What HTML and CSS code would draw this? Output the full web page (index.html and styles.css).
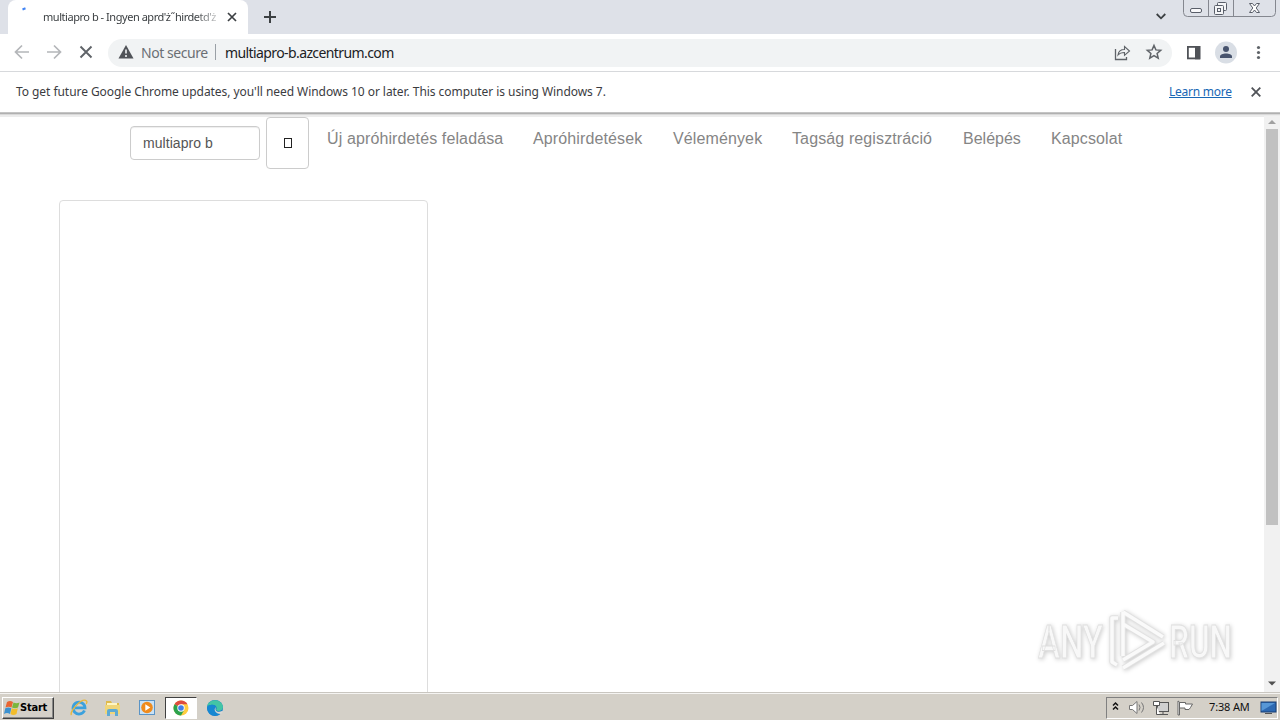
FILE: index.html
```html
<!DOCTYPE html>
<html lang="hu">
<head>
<meta charset="utf-8">
<title>multiapro b</title>
<link rel="stylesheet" href="styles.css">
</head>
<body>
<div class="screen">
  <header class="tabstrip">
    <div class="tab">
      <svg class="spinner" width="16" height="20" viewBox="0 0 16 20"><path d="M6.500 6.500l3-1.200" stroke="#4285f4" stroke-width="2" fill="none"/></svg>
      <span class="tab-title">multiapro b - Ingyen aprd'ż˝hirdetd'ż</span>
      <svg class="tab-close" width="10" height="10" viewBox="0 0 10 10"><path d="M1 1l8 8M9 1l-8 8" stroke="#3c4043" stroke-width="1.7"/></svg>
    </div>
    <svg class="new-tab" width="12" height="12" viewBox="0 0 12 12"><path d="M6 0v12M0 6h12" stroke="#3c4043" stroke-width="2"/></svg>
    <svg class="tab-menu" width="10" height="7" viewBox="0 0 10 7"><path d="M.7 1l4.3 4.3L9.300 1" fill="none" stroke="#3c4043" stroke-width="1.8"/></svg>
    <div class="window-buttons">
      <svg width="94" height="18" viewBox="0 0 94 18">
        <path d="M.5 0v12.500q0 4 4 4h84q4 0 4-4V0M25.500 0v16M50.500 0v16" fill="none" stroke="#84878f"/>
        <rect x="7.500" y="8.500" width="11" height="4" rx="1.500" fill="#f8f8fa" stroke="#595e69"/>
        <g fill="#f4f5f7" stroke="#595e69"><rect x="34.500" y="2.500" width="9" height="8" rx="1"/><rect x="31.500" y="5.500" width="9" height="9" rx="1"/><rect x="34.500" y="8.500" width="3" height="3"/></g>
        <path d="M66.500 3.500h3l2 2.500 2-2.500h3l-3.300 4.500 3.300 4.500h-3l-2-2.500-2 2.500h-3l3.300-4.500z" fill="#fff" stroke="#595e69"/>
      </svg>
    </div>
  </header>

  <div class="toolbar">
    <svg class="nav-icons" width="108" height="36" viewBox="0 0 108 36" fill="none" stroke-width="1.700">
      <path d="M29 17H16M22 10.500L15.500 17l6.500 6.500M47 17h13M54 10.500l6.500 6.500-6.500 6.500" stroke="#b4b6b9"/>
      <path d="M80.500 11.500l11 11M91.500 11.500l-11 11" stroke="#5f6368" stroke-width="1.900"/>
    </svg>
    <div class="omnibox">
      <svg class="warn" width="16" height="14" viewBox="0 0 16 14"><path d="M8 0l7.500 13.500H.5z" fill="#505358"/><path d="M8 4.500v4M8 10v2" stroke="#f1f3f4" stroke-width="1.600"/></svg>
      <span class="not-secure">Not secure</span>
      <span class="divider"></span>
      <span class="url">multiapro-b.azcentrum.com</span>
      <svg class="omni-icons" width="52" height="20" viewBox="0 0 52 20" fill="none" stroke="#5f6368" stroke-width="1.300">
        <path d="M3.500 6v10.500h11V14"/><path d="M6 12c.5-4 2.500-5.500 6.500-5.500V3.500l5 4.500-5 4.300V9.500c-3 0-4.800.5-6.500 2.500z" stroke-width="1.100"/>
        <path d="M42 2.500l1.900 4.400 4.800.4-3.600 3.200 1.100 4.700-4.200-2.500-4.200 2.500 1.100-4.700-3.600-3.200 4.800-.4z" stroke-width="1.500"/>
      </svg>
    </div>
    <svg class="right-icons" width="96" height="24" viewBox="0 0 96 24">
      <rect x="3.900" y="5.900" width="11.500" height="11.500" fill="none" stroke="#505358" stroke-width="1.800"/><rect x="11" y="5" width="5.300" height="13.300" fill="#505358"/>
      <circle cx="42" cy="11.500" r="11" fill="#d9dee5"/><circle cx="42" cy="8" r="3" fill="#47536d"/><path d="M36 17v-1.500c0-4 12-4 12 0v1.500z" fill="#47536d"/>
      <g fill="#5f6368"><circle cx="74.500" cy="6.500" r="1.600"/><circle cx="74.500" cy="11.500" r="1.600"/><circle cx="74.500" cy="16.500" r="1.600"/></g>
    </svg>
  </div>

  <div class="infobar">
    <span class="info-text">To get future Google Chrome updates, you'll need Windows 10 or later. This computer is using Windows 7.</span>
    <span class="learn">Learn more</span>
    <svg class="info-close" width="10" height="10" viewBox="0 0 10 10"><path d="M.7.700l8.600 8.600M9.300.700L.7 9.300" stroke="#505358" stroke-width="1.800"/></svg>
  </div>

  <div class="viewport">
    <main class="page">
      <nav class="site-nav">
        <div class="search-field">multiapro b</div>
        <div class="search-button"><span class="missing-glyph"></span></div>
        <a class="n1">Új apróhirdetés feladása</a>
        <a class="n2">Apróhirdetések</a>
        <a class="n3">Vélemények</a>
        <a class="n4">Tagság regisztráció</a>
        <a class="n5">Belépés</a>
        <a class="n6">Kapcsolat</a>
      </nav>
      <section class="card"></section>
    </main>
    <aside class="scrollbar">
      <svg width="16" height="12" viewBox="0 0 16 12"><path d="M4 8l4-4 4 4z" fill="#a0a0a0"/></svg>
      <div class="thumb"></div>
      <svg class="down" width="16" height="14" viewBox="0 0 16 14"><path d="M4 4.500l4 4 4-4z" fill="#505050"/></svg>
    </aside>
    <svg class="watermark" width="210" height="72" viewBox="0 0 210 72">
      <g class="mark-text"><text x="7" y="54" textLength="65" lengthAdjust="spacingAndGlyphs">ANY</text><text x="138" y="54" textLength="63" lengthAdjust="spacingAndGlyphs">RUN</text></g>
      <g fill="none" stroke-linejoin="round">
        <path d="M87 14h-6v44l5 3M92 64l41-25M92 8v44M92 8l40 25M92 20l30 18-30 18" stroke="#e2e2e2" stroke-width="5.500"/>
        <path d="M87 14h-6v44l5 3M92 64l41-25M92 8v44M92 8l40 25M92 20l30 18-30 18" stroke="#fafafa" stroke-width="3.500"/>
      </g>
    </svg>
  </div>

  <footer class="taskbar">
    <div class="start">
      <svg width="18" height="16" viewBox="0 0 18 16"><path d="M4 2q3-2 6 0L8.500 7.500q-3-1.500-6 0z" fill="#e96532"/><path d="M10.500 2.500q3 1.500 6 0l-1.500 5q-3 1.500-6 0z" fill="#7bb63b"/><path d="M2.300 8.200q3-1.500 6 0L7 14q-3-2-6 0z" fill="#3c91d0"/><path d="M8.800 8.300q3 1.500 6 0L13.500 14q-3 2-6 0z" fill="#f2bd2c"/></svg>
      <span>Start</span>
    </div>
    <div class="task ie"><svg width="18" height="18" viewBox="0 0 18 18"><path d="M14.500 11.500A6 6 0 1 1 15 8.800H5" fill="none" stroke="#3ba1dd" stroke-width="2.800"/><path d="M1.500 16C-1 13 12-2 16.500 2q1 1-.3 3" fill="none" stroke="#e8b73c" stroke-width="1.300"/></svg></div>
    <div class="task"><svg width="18" height="18" viewBox="0 0 18 18"><path d="M2 2h5l1 2h7v9H2z" fill="#dfba4b"/><path d="M3 4h10v8H3z" fill="#fff6c3"/><path d="M1 6h15v9H1z" fill="#f0d67a"/><path d="M3 17v-5q0-2 2-2h7q2 0 2 2v5h-3v-4H6v4z" fill="#5eaad3"/></svg></div>
    <div class="task"><svg width="18" height="18" viewBox="0 0 18 18"><rect x="1.500" y="1.500" width="15" height="14" fill="#c9e2f6" stroke="#5a94c6"/><circle cx="9" cy="8.500" r="5.800" fill="#ef8b1d"/><path d="M7.300 5.300v6.400l5-3.200z" fill="#fff"/></svg></div>
    <div class="task active"><svg width="16" height="16" viewBox="0 0 16 16"><circle cx="8" cy="8" r="7.500" fill="#ffcd40"/><path d="M8 8L1.500 4.250A7.500 7.500 0 0 1 14.500 4.250H8z" fill="#de4c40"/><path d="M8 8L1.500 4.250A7.500 7.500 0 0 0 8 15.500l3.200-5.600z" fill="#2ba24d"/><circle cx="8" cy="8" r="3.700" fill="#fff"/><circle cx="8" cy="8" r="2.800" fill="#427fe8"/></svg></div>
    <div class="task edge"><svg width="18" height="18" viewBox="0 0 18 18"><circle cx="9" cy="9" r="8" fill="#167bc9"/><path d="M1 8C2-1 16-1 17 8c0 4-5 5-7 3 2-3-1-6-5-5Q2 6 1 8z" fill="#43c5a5"/><path d="M1 8c2-3 8-3 9 0-3 0-3 6 5 6-4 5-14 3-14-6z" fill="#1688d2"/><path d="M10 8c-2 4 2 6 6 4l1 .5-2 2.500c-6 0-8-5-5-7z" fill="#ddd9d3"/></svg></div>
    <div class="tray">
      <svg width="90" height="20" viewBox="0 0 90 20">
        <path d="M6 7.500l2.500-2.500L11 7.500M6 11.500l2.500-2.500L11 11.500" fill="none" stroke="#111" stroke-width="1.500"/>
        <path d="M22.500 7.500h3l4.500-4v12l-4.500-4h-3z" fill="#fff" stroke="#777"/><path d="M32 6.500q2 3 0 6M34.500 4.500q4 5 0 10" fill="none" stroke="#777"/>
        <rect x="50.500" y="4.500" width="11" height="9" fill="#d0d0d0" stroke="#555"/><path d="M52 16.500h9M56 14v2" stroke="#555"/><path d="M46.500 3.500h6v4h-6zM49.500 7.500v9H53" fill="#fff" stroke="#555"/>
        <path d="M71 3v14h1.500V4z" fill="#fff" stroke="#666"/><path d="M72.500 4.500h6v1.500h7l-2 3.500-1.500 2h-4V10h-5.500z" fill="#fff" stroke="#666"/>
      </svg>
      <span class="clock">7:38 AM</span>
      <svg class="desktop" width="17" height="15" viewBox="0 0 17 15"><rect x="1" y="2" width="15" height="10" fill="#2d69b2" stroke="#183f75"/><path d="M1.500 11V3H15z" fill="#5797d6"/><path d="M5 13.500h7" stroke="#555"/></svg>
    </div>
  </footer>
</div>
</body>
</html>
```
FILE: styles.css
```css
* { box-sizing: border-box; }
body { margin: 0; background: #fff; font-family: "Noto Sans", sans-serif; }
svg { display: block; flex: none; }
.screen { width: 1280px; height: 720px; display: flex; flex-direction: column; overflow: hidden; }
.screen span, .site-nav a { white-space: nowrap; }
.tabstrip { height: 34px; flex: none; display: flex; background: #dee1e8; }
.tab { width: 240px; height: 34px; margin-left: 8px; background: #fff; display: flex; align-items: center; border-radius: 8px 8px 0 0; }
.spinner { margin: -8px 0 0 8px; }
.tab-title { width: 177px; height: 17px; margin: -1px 0 0 11px; font-size: 11px; line-height: 17px; letter-spacing: -0.46px; color: #3c4043; -webkit-mask-image: linear-gradient(90deg, #000 86%, rgba(0,0,0,.15)); }
.tab-close { margin-left: 7px; }
.new-tab { margin: 11px 0 0 16px; }
.tab-menu { margin: 13px 0 0 880px; }
.window-buttons { margin-left: 17px; }
.toolbar { height: 38px; flex: none; display: flex; align-items: center; border-bottom: 1px solid #d7d9dc; background: #fff; }
.omnibox { width: 1064px; height: 28px; border-radius: 14px; background: #f1f3f4; display: flex; align-items: center; font-size: 14px; }
.warn { margin: -2px 0 0 10px; }
.not-secure { width: 67px; margin-left: 7px; color: #6b6f74; letter-spacing: -0.45px; }
.divider { width: 1px; height: 16px; margin: -2px 0 0 7px; background: #9aa0a6; }
.url { width: 180px; margin-left: 9px; color: #202124; letter-spacing: -0.6px; }
.omni-icons { margin-left: auto; margin-right: 8px; }
.right-icons { margin-left: 12px; }
.infobar { height: 40px; flex: none; padding: 0 19px 2px 16px; display: flex; align-items: center; font-size: 12px; color: #3b3c3f; }
.info-text { letter-spacing: -.055px; }
.learn { margin-left: auto; width: 62px; color: #1967b5; letter-spacing: -.26px; text-decoration: underline; }
.info-close { margin: 1px 0 0 20px; }
.viewport { position: relative; height: 580px; flex: none; display: flex; background: #fff; box-shadow: inset 0 1px #c4c4c4, inset 0 2px #b0b0b0, inset 0 3px #d8d8d8, inset 0 5px #ececec; }
.page { width: 1264px; height: 580px; overflow: hidden; }
.site-nav { display: flex; height: 88px; padding: 5px 0 0 130px; font: 16px/20px "Liberation Sans", Arial, sans-serif; letter-spacing: .12px; color: #858585; }
.search-field { width: 130px; height: 34px; margin-top: 9px; padding: 6px 12px; border: 1px solid #ccc; border-radius: 4px; box-shadow: inset 0 1px 1px #eee; font-size: 14px; letter-spacing: .05px; color: #555; }
.search-button { width: 43px; height: 52px; margin: 0 18px 0 6px; border: 1px solid #ccc; border-radius: 4px; display: flex; align-items: center; justify-content: center; background: #fff; }
.missing-glyph { width: 8px; height: 10px; border: 1px solid #222; }
.site-nav a { padding-top: 12px; flex: none; }
.n1 { width: 206px; }
.n2 { width: 140px; }
.n3 { width: 119px; }
.n4 { width: 171px; }
.n5 { width: 88px; letter-spacing: 0; }
.card { width: 369px; height: 520px; margin-left: 59px; border: 1px solid #ddd; border-radius: 4px; }
.scrollbar { width: 16px; height: 576px; margin-top: 4px; background: #f1f1f1; display: flex; flex-direction: column; align-items: center; }
.thumb { width: 12px; height: 396px; margin-top: 1px; background: #c1c1c1; }
.down { margin-top: auto; margin-bottom: 1px; }
.watermark { position: absolute; left: 1031px; top: 492px; overflow: visible; filter: drop-shadow(1px 1px 2px #ccc); }
.mark-text { font: 500 47px Roboto, sans-serif; fill: #f8f8f8; stroke: #e0e0e0; stroke-width: .8px; }
.taskbar { height: 28px; flex: none; display: flex; align-items: center; background: #d4d0c8; border-top: 1px solid #c9c6c0; box-shadow: inset 0 1px #f5f4f2; padding: 2px 0 0 2px; }
.start { width: 52px; height: 22px; border: 1px solid; border-color: #fff #404040 #404040 #fff; box-shadow: inset -1px -1px #888; display: flex; align-items: center; font: bold 11px "DejaVu Sans Condensed", "DejaVu Sans", sans-serif; letter-spacing: -.2px; color: #000; }
.start span { margin: -1px 0 0 -1px; }
.task { width: 34px; height: 22px; display: flex; align-items: center; justify-content: center; }
.ie { margin-left: 8px; }
.task.active { width: 32px; margin-left: 1px; background: #fff; border: 1px solid; border-color: #404040 #fff #fff #404040; }
.edge { margin-left: 1px; }
.tray { width: 172px; height: 22px; margin-left: auto; margin-right: 2px; border: 1px solid; border-color: #808080 #fff #fff #808080; display: flex; align-items: center; color: #111; }
.clock { width: 43px; margin: -2px 0 0 12px; font-size: 11px; letter-spacing: -.15px; }
.desktop { margin: -1px 0 0 8px; }
```
